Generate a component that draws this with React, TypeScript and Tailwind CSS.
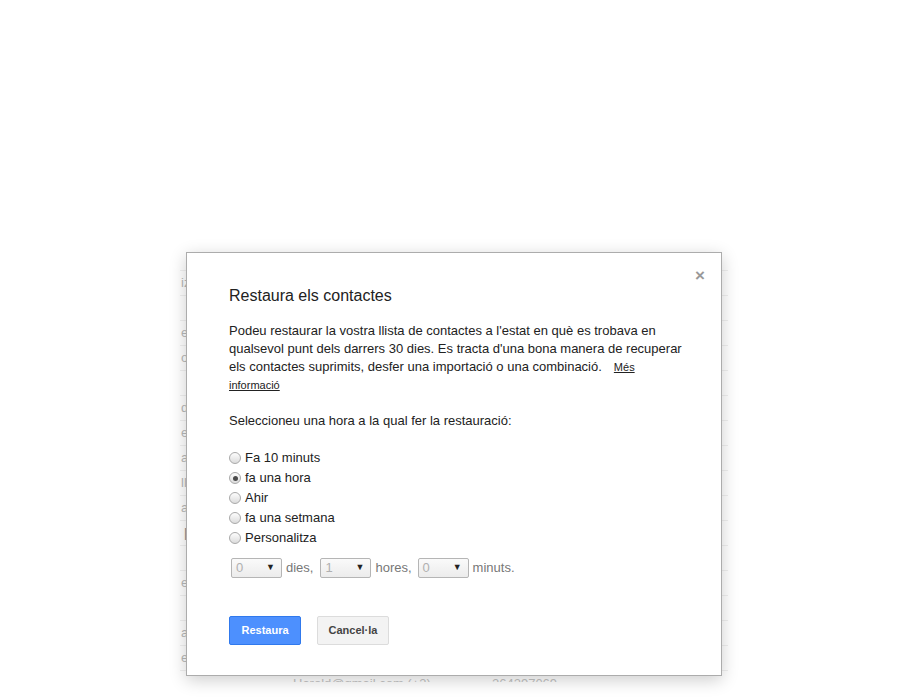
import React from "react";

const bgRows = ["iz", "", "el", "o", "", "de", "e", "ar", "ll", "a", "|", "", "e", "", "a", "e"];

const options = ["Fa 10 minuts", "fa una hora", "Ahir", "fa una setmana", "Personalitza"];

const Radio = ({ checked }: { checked?: boolean }) => (
  <span className="flex h-[12px] w-[12px] items-center justify-center rounded-full border border-[#a9a9a9] bg-gradient-to-b from-[#fdfdfd] to-[#dcdcdc]">
    {checked && <span className="h-[5px] w-[5px] rounded-full bg-[#4a4a4a]" />}
  </span>
);

const Select = ({ value }: { value: string }) => (
  <span className="flex h-[20px] w-[51px] items-center justify-between rounded-[2px] border border-[#b5b5b5] bg-gradient-to-b from-[#fafafa] to-[#ececec] pl-[4px] pr-[6px] text-[13px] text-[#b0b0b0]">
    <span>{value}</span>
    <span className="text-[9px] text-[#222]">▼</span>
  </span>
);

export default function App() {
  return (
    <div className="relative h-[700px] w-[900px] bg-white font-['Liberation_Sans',Arial,sans-serif]">
      <div className="absolute left-[180px] top-[253px] h-[429px] w-[548px] overflow-hidden">
        <div className="h-[18px] border-b border-[#f0f0f0]" />
        {bgRows.map((r, i) => (
          <div key={i} className="flex h-[25px] items-center border-b border-[#f0f0f0] text-[13px] text-[#b8b8b8]">
            <span className={r === "|" ? "pl-[4px] font-bold text-[#9a9a9a]" : "pl-[1px]"}>{r}</span>
          </div>
        ))}
        <div className="flex h-[25px] items-center text-[13px] text-[#c4c4c4]">
          <span className="ml-[113px] w-[199px]">Harold@gmail.com (+3)</span>
          <span>264297069</span>
        </div>
      </div>

      <div className="absolute left-[186px] top-[252px] h-[424px] w-[536px] border border-[#acacac] bg-white pl-[42px] pt-[33px] text-[#222] shadow-[0_4px_16px_rgba(0,0,0,0.2)]">
        <button className="absolute right-[16px] top-[14px] text-[17px] font-bold leading-none text-[#999]">×</button>
        <h1 className="text-[16px] leading-[20px]">Restaura els contactes</h1>
        <p className="mt-[16px] w-[470px] text-[13px] leading-[18px]">
          Podeu restaurar la vostra llista de contactes a l'estat en què es trobava en qualsevol punt dels darrers 30 dies. Es tracta d'una bona manera de recuperar els contactes suprimits, desfer una importació o una combinació.
          <a className="ml-[12px] text-[11px] underline">
            Més
            <br />
            informació
          </a>
        </p>
        <p className="mt-[18px] text-[13px] leading-[18px]">Seleccioneu una hora a la qual fer la restauració:</p>
        <div className="mt-[18px] flex flex-col">
          {options.map((o, i) => (
            <label key={o} className="flex h-[20px] items-center gap-[4px] text-[13px]">
              <Radio checked={i === 1} />
              <span>{o}</span>
            </label>
          ))}
        </div>
        <div className="mt-[9px] flex h-[22px] items-center pl-[2px] text-[13px] text-[#777]">
          <Select value="0" />
          <span className="ml-[4px] mr-[7px]">dies,</span>
          <Select value="1" />
          <span className="ml-[4px] mr-[6px]">hores,</span>
          <Select value="0" />
          <span className="ml-[4px]">minuts.</span>
        </div>
        <div className="mt-[37px] flex gap-[16px]">
          <button className="h-[29px] w-[72px] rounded-[2px] border border-[#3079ed] bg-[#4d90fe] text-[11px] font-bold text-white">
            Restaura
          </button>
          <button className="h-[29px] w-[72px] rounded-[2px] border border-[#dcdcdc] bg-[#f3f3f3] text-[11px] font-bold text-[#444]">
            Cancel·la
          </button>
        </div>
      </div>
    </div>
  );
}
